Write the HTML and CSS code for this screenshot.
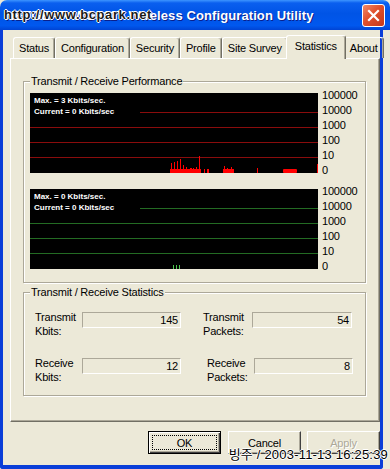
FILE: index.html
```html
<!doctype html>
<html lang="en">
  <head>
    <meta charset="UTF-8" />
    <title>Wireless Configuration Utility</title>
    <link rel="stylesheet" href="styles.css">
  </head>
  <body>
    <div class="window">
      <!-- Title bar -->
      <div class="titlebar">
        <span class="title">NETGEAR WG511T Wireless Configuration Utility</span>
        <span class="close">
          <svg width="21" height="21" viewBox="0 0 21 21">
            <path d="M6 6 L15 15 M15 6 L6 15" stroke="#fff" stroke-width="2.2" stroke-linecap="square" />
          </svg>
        </span>
        <span class="stamp-top">http://www.bcpark.net</span>
      </div>

      <div class="frame">
        <!-- Tabs -->
        <div class="tabs">
          <div class="tab">Status</div>
          <div class="tab">Configuration</div>
          <div class="tab">Security</div>
          <div class="tab">Profile</div>
          <div class="tab">Site Survey</div>
          <div class="tab active">Statistics</div>
          <div class="tab">About</div>
        </div>

        <div class="panel">
          <fieldset class="group perf">
            <legend>Transmit / Receive Performance</legend>

            <div class="chart">
              <div class="plot">
                <svg width="288" height="80">
                  <g stroke="#8a0c0c" stroke-width="1">
                    <line x1="110" y1="19.5" x2="288" y2="19.5" />
                    <line x1="0" y1="34.5" x2="288" y2="34.5" />
                    <line x1="0" y1="49.5" x2="288" y2="49.5" />
                    <line x1="0" y1="64.5" x2="288" y2="64.5" />
                  </g>
                  <g fill="#ff0000">
                    <rect x="140" y="76" width="31" height="4" />
                    <rect x="141" y="70" width="1" height="10" />
                    <rect x="144" y="69" width="1" height="11" />
                    <rect x="147" y="68" width="1" height="12" />
                    <rect x="150" y="66" width="1" height="14" />
                    <rect x="153" y="72" width="1" height="8" />
                    <rect x="156" y="74" width="1" height="6" />
                    <rect x="160" y="75" width="2" height="5" />
                    <rect x="163" y="75" width="1" height="5" />
                    <rect x="166" y="74" width="1" height="6" />
                    <rect x="169" y="63" width="1" height="17" />
                    <rect x="174" y="76" width="1" height="4" />
                    <rect x="177" y="76" width="2" height="4" />
                    <rect x="193" y="76" width="11" height="4" />
                    <rect x="194" y="73" width="1" height="7" />
                    <rect x="197" y="75" width="1" height="5" />
                    <rect x="201" y="74" width="1" height="6" />
                    <rect x="227" y="75" width="1" height="5" />
                    <rect x="253" y="76" width="14" height="4" rx="1" />
                    <rect x="287" y="71" width="1" height="9" />
                  </g>
                </svg>
                <div class="readout">Max. = 3 Kbits/sec.<br />Current = 0 Kbits/sec</div>
              </div>
              <ul class="scale">
                <li>100000</li>
                <li>10000</li>
                <li>1000</li>
                <li>100</li>
                <li>10</li>
                <li>0</li>
              </ul>
            </div>

            <div class="chart">
              <div class="plot">
                <svg width="288" height="80">
                  <g stroke="#236b23" stroke-width="1">
                    <line x1="110" y1="19.5" x2="288" y2="19.5" />
                    <line x1="0" y1="34.5" x2="288" y2="34.5" />
                    <line x1="0" y1="49.5" x2="288" y2="49.5" />
                    <line x1="0" y1="64.5" x2="288" y2="64.5" />
                  </g>
                  <g fill="#4cc44c">
                    <rect x="143" y="76" width="1" height="4" />
                    <rect x="146" y="76" width="1" height="4" />
                    <rect x="149" y="76" width="1" height="4" />
                  </g>
                </svg>
                <div class="readout">Max. = 0 Kbits/sec.<br />Current = 0 Kbits/sec</div>
              </div>
              <ul class="scale">
                <li>100000</li>
                <li>10000</li>
                <li>1000</li>
                <li>100</li>
                <li>10</li>
                <li>0</li>
              </ul>
            </div>
          </fieldset>

          <fieldset class="group stats">
            <legend>Transmit / Receive Statistics</legend>
            <div class="stats-grid">
              <div class="label">Transmit<br />Kbits:</div>
              <div class="field">145</div>
              <div class="label right">Transmit<br />Packets:</div>
              <div class="field">54</div>

              <div class="label">Receive<br />Kbits:</div>
              <div class="field">12</div>
              <div class="label right indent">Receive<br />Packets:</div>
              <div class="field shifted">8</div>
            </div>
          </fieldset>
        </div>

        <div class="buttons">
          <button class="btn default">OK</button>
          <button class="btn">Cancel</button>
          <button class="btn" disabled>Apply</button>
        </div>
      </div>

      <span class="stamp-bottom">빙주 / 2003-11-13 16:25:39</span>
    </div>
  </body>
</html>
```

FILE: styles.css
```css
/* Page */
body {
  margin: 0;
  background: #ece9d8;
  font-family: "Liberation Sans", Arial, sans-serif;
  font-size: 11px;
  letter-spacing: -0.2px;
  color: #000;
}

.window {
  width: 390px;
  height: 469px;
  display: flex;
  flex-direction: column;
  position: relative;
}

/* Title bar */
.titlebar {
  height: 30px;
  flex: none;
  display: flex;
  align-items: center;
  padding: 0 5px;
  border-radius: 7px 7px 0 0;
  background: linear-gradient(
    #3d95ff 0,
    #0a5fef 3px,
    #0054e6 45%,
    #0058ee 85%,
    #0044d4 100%
  );
  position: relative;
}

.title {
  flex: 1;
  color: #fff;
  font-weight: bold;
  font-size: 13px;
  letter-spacing: 0.1px;
  white-space: nowrap;
  overflow: hidden;
  text-shadow: 1px 1px #0a1f8c;
}

.close {
  width: 21px;
  height: 21px;
  border: 1px solid #fff;
  border-radius: 3px;
  background: linear-gradient(135deg, #f08a6a, #e0502c 45%, #c4381a);
  display: flex;
}

.stamp-top {
  position: absolute;
  left: 4px;
  top: 7px;
  font-weight: bold;
  font-size: 13px;
  letter-spacing: 0.6px;
  color: #1a1a1a;
  text-shadow: 1px 0 #fff, -1px 0 #fff, 0 1px #fff, 0 -1px #fff;
}

/* Window body */
.frame {
  flex: 1;
  margin-right: 7px;
  border: 3px solid #0a3ed8;
  border-top: 0;
  border-bottom-width: 4px;
  border-radius: 0 0 3px 3px;
  background: #ece9d8;
  display: flex;
  flex-direction: column;
}

/* Tabs */
.tabs {
  display: flex;
  align-items: flex-end;
  padding: 5px 0 0 10px;
}

.tab {
  padding: 2px 5px;
  line-height: 16px;
  white-space: nowrap;
  border: 1px solid #fff;
  border-bottom: 0;
  border-right-color: #716f64;
  border-radius: 3px 3px 0 0;
  box-shadow: inset -1px 0 #aca899;
}

.tab.active {
  margin: 0 -2px -1px;
  padding: 2px 8px 5px;
  background: #ece9d8;
  position: relative;
  z-index: 1;
}

.panel {
  margin-left: 7px;
  height: 364px;
  box-sizing: border-box;
  padding: 16px 13px 0 12px;
  border: 1px solid;
  border-color: #fff #716f64 #716f64 #fff;
  box-shadow: inset -1px -1px #aca899;
}

/* Group boxes */
.group {
  margin: 0;
  padding: 5px 0 13px 6px;
  min-width: 0;
  border: 1px solid #aca899;
  box-shadow: inset 1px 1px #fff, 1px 1px #fff;
}

.group legend {
  padding: 0 1px;
  line-height: 13px;
  background: #ece9d8;
}

.group.stats {
  margin-top: 3px;
  padding: 11px 0 11px 6px;
}

/* Graphs */
.chart {
  height: 80px;
  display: flex;
  gap: 4px;
  align-items: flex-start;
}

.chart + .chart {
  margin-top: 16px;
}

.plot {
  width: 288px;
  height: 80px;
  flex: none;
  background: #000;
  position: relative;
}

.plot svg {
  display: block;
}

.readout {
  position: absolute;
  left: 4px;
  top: 2px;
  color: #fff;
  font-size: 8px;
  font-weight: bold;
  line-height: 11px;
  letter-spacing: 0;
}

.scale {
  list-style: none;
  margin: -5px 0 0;
  padding: 0;
  line-height: 15px;
}

/* Counters */
.stats-grid {
  display: grid;
  grid-template-columns: 47px 99px 71px 100px;
  row-gap: 18px;
  margin-left: 5px;
}

.label {
  line-height: 14px;
}

.label.right {
  padding-left: 22px;
}

.label.indent {
  padding-left: 26px;
}

.field {
  height: 16px;
  box-sizing: border-box;
  margin-top: 2px;
  padding-right: 2px;
  line-height: 14px;
  text-align: right;
  border: 1px solid;
  border-color: #aca899 #fff #fff #aca899;
}

.field.shifted {
  margin-left: 2px;
  width: 99px;
}

/* Dialog buttons */
.buttons {
  display: flex;
  justify-content: flex-end;
  gap: 7px;
  margin-top: 9px;
}

.btn {
  width: 73px;
  height: 23px;
  padding: 0;
  font: inherit;
  letter-spacing: inherit;
  color: #000;
  background: #ece9d8;
  border: 1px solid;
  border-color: #fff #404040 #404040 #fff;
  box-shadow: inset -1px -1px #aca899;
}

.btn.default {
  border-color: #000;
  box-shadow: inset 1px 1px #fff, inset -1px -1px #404040,
    inset -2px -2px #aca899;
  outline: 1px dotted #000;
  outline-offset: -5px;
}

.btn:disabled {
  color: #aca899;
  text-shadow: 1px 1px #fff;
}

.btn:last-child {
  margin-left: -1px;
}

.stamp-bottom {
  position: absolute;
  right: 2px;
  top: 444px;
  font-family: "Liberation Sans", "Noto Sans CJK KR", sans-serif;
  font-size: 13px;
  letter-spacing: 0.2px;
  color: #000;
  text-shadow: 1px 0 #fff, -1px 0 #fff, 0 1px #fff, 0 -1px #fff;
}
```
